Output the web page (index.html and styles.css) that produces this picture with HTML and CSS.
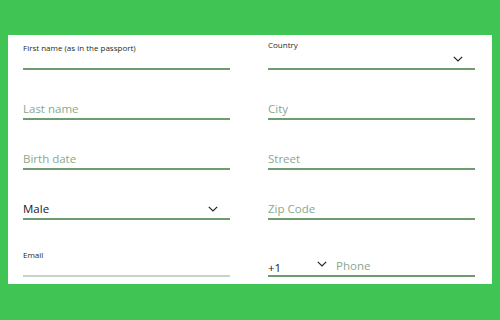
FILE: index.html
```html
<!DOCTYPE html>
<html lang="en">

<head>
    <meta charset="UTF-8">
    <meta name="viewport" content="width=device-width, initial-scale=1.0">
    <title>Personal details</title>
    <link rel="stylesheet" href="styles.css">
</head>

<body>
    <div class="container">
        <div class="form-grid">
            <div class="field">
                <label class="field-label passport">First name (as in the passport)</label>
                <div class="field-line"></div>
            </div>
            <div class="field">
                <label class="field-label country">Country</label>
                <div class="field-line">
                    <span class="value"></span>
                    <svg class="chevron" width="10" height="6" viewBox="0 0 10 6"><path d="M0.8 0.8 L5 5 L9.2 0.8" fill="none" stroke="#222" stroke-width="1.2"/></svg>
                </div>
            </div>

            <div class="field">
                <div class="field-line"><span class="placeholder">Last name</span></div>
            </div>
            <div class="field">
                <div class="field-line"><span class="placeholder">City</span></div>
            </div>

            <div class="field">
                <div class="field-line"><span class="placeholder">Birth date</span></div>
            </div>
            <div class="field">
                <div class="field-line"><span class="placeholder">Street</span></div>
            </div>

            <div class="field">
                <div class="field-line">
                    <span class="value">Male</span>
                    <svg class="chevron" width="10" height="6" viewBox="0 0 10 6"><path d="M0.8 0.8 L5 5 L9.2 0.8" fill="none" stroke="#222" stroke-width="1.2"/></svg>
                </div>
            </div>
            <div class="field">
                <div class="field-line"><span class="placeholder">Zip Code</span></div>
            </div>

            <div class="field last-row">
                <label class="field-label email">Email</label>
                <div class="field-line muted"></div>
            </div>
            <div class="field last-row">
                <div class="field-line phone">
                    <span class="code">+1</span>
                    <svg class="chevron" width="10" height="6" viewBox="0 0 10 6"><path d="M0.8 0.8 L5 5 L9.2 0.8" fill="none" stroke="#222" stroke-width="1.2"/></svg>
                    <span class="placeholder">Phone</span>
                </div>
            </div>
        </div>
    </div>
</body>

</html>
```

FILE: styles.css
```css
body {
    margin: 0;
    padding: 35px 8px 0;
    background-color: #40c453;
    font-family: "Open Sans", Arial, sans-serif;
}

.container {
    height: 249px;
    padding: 0 17px 0 15px;
    background-color: white;
    box-sizing: border-box;
}

.form-grid {
    display: grid;
    grid-template-columns: 1fr 1fr;
    column-gap: 38px;
    grid-template-rows: repeat(4, 50px) 50px;
}

.field {
    display: flex;
    flex-direction: column;
    justify-content: flex-end;
    padding-bottom: 15px;
}

.field.last-row {
    padding-bottom: 8px;
}

.field-label {
    font-size: 8px;
    line-height: 8px;
    font-weight: 500;
    color: #1d2b1d;
}

.field-label.passport {
    margin-bottom: -4px;
}

.field-label.country {
    margin-bottom: -1px;
}

.field-label.email {
    margin-bottom: -4px;
}

.field-line {
    display: flex;
    align-items: flex-end;
    height: 22px;
    padding-bottom: 4px;
    box-sizing: border-box;
    border-bottom: 2px solid #6f9c6f;
    font-size: 11.5px;
    line-height: 11px;
}

.field-line.muted {
    border-bottom-color: #c6d3c6;
}

.placeholder {
    color: #8ba78b;
}

.value {
    flex: 1;
    color: #1a1a1a;
}

.chevron {
    margin: 0 12px 2px 0;
}

.phone .code {
    width: 49px;
    color: #1a1a1a;
    margin-bottom: -2px;
}

.phone .chevron {
    margin: 0 9px 4px 0;
}
```
